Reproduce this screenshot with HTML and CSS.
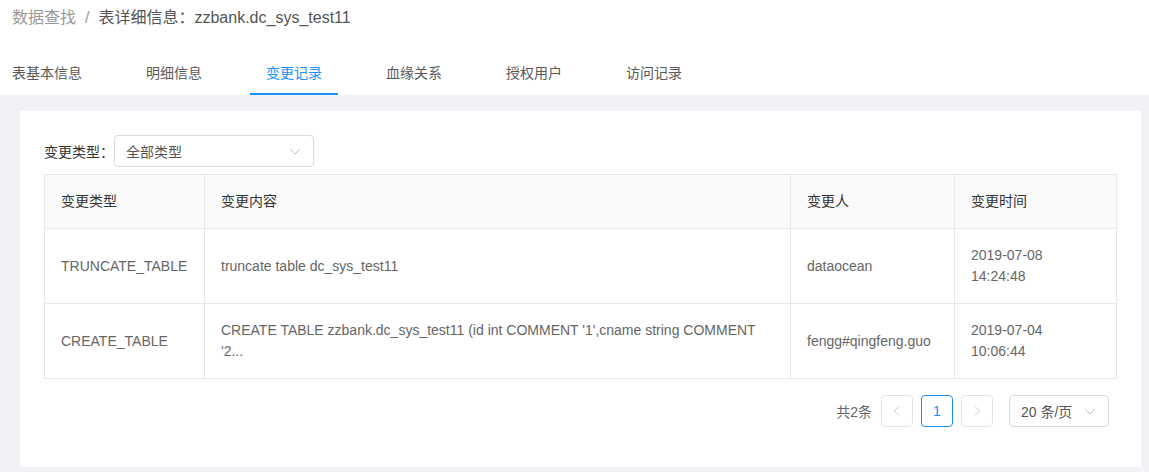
FILE: index.html
```html
<!DOCTYPE html>
<html lang="zh-CN">
<head>
<meta charset="utf-8">
<title>表详细信息</title>
<link rel="stylesheet" href="styles.css">
</head>
<body>
<header class="top">
  <div class="crumbs">
    <span class="crumb-link">数据查找</span>
    <span class="crumb-sep">/</span>
    <span class="crumb-cur">表详细信息：zzbank.dc_sys_test11</span>
  </div>
  <nav class="tabs">
    <span class="tab">表基本信息</span>
    <span class="tab">明细信息</span>
    <span class="tab active">变更记录</span>
    <span class="tab">血缘关系</span>
    <span class="tab">授权用户</span>
    <span class="tab">访问记录</span>
  </nav>
</header>
<main class="page">
  <section class="card">
    <div class="filter">
      <span class="filter-label">变更类型：</span>
      <div class="select">
        <span class="select-value">全部类型</span>
        <svg class="chev" width="12" height="12" viewBox="0 0 12 12"><path d="M1 4l5 5 5-5" fill="none" stroke="#bfbfbf" stroke-width="1"/></svg>
      </div>
    </div>
    <table class="grid">
      <colgroup>
        <col class="c1"><col class="c2"><col class="c3"><col class="c4">
      </colgroup>
      <thead>
        <tr><th>变更类型</th><th>变更内容</th><th>变更人</th><th>变更时间</th></tr>
      </thead>
      <tbody>
        <tr>
          <td>TRUNCATE_TABLE</td>
          <td>truncate table dc_sys_test11</td>
          <td>dataocean</td>
          <td><span class="line">2019-07-08</span><span class="line">14:24:48</span></td>
        </tr>
        <tr>
          <td>CREATE_TABLE</td>
          <td>CREATE TABLE zzbank.dc_sys_test11 (id int COMMENT '1',cname string COMMENT<br>'2...</td>
          <td>fengg#qingfeng.guo</td>
          <td><span class="line">2019-07-04</span><span class="line">10:06:44</span></td>
        </tr>
      </tbody>
    </table>
    <div class="pager">
      <span class="total">共2条</span>
      <span class="pbtn muted"><svg width="12" height="12" viewBox="0 0 12 12"><path d="M8 1.5L3.5 6 8 10.5" fill="none" stroke="#c8c8c8" stroke-width="1"/></svg></span>
      <span class="pbtn current">1</span>
      <span class="pbtn muted"><svg width="12" height="12" viewBox="0 0 12 12"><path d="M4 1.5L8.5 6 4 10.5" fill="none" stroke="#c8c8c8" stroke-width="1"/></svg></span>
      <div class="size">
        <span>20 条/页</span>
        <svg class="chev" width="12" height="12" viewBox="0 0 12 12"><path d="M1 4l5 5 5-5" fill="none" stroke="#bfbfbf" stroke-width="1"/></svg>
      </div>
    </div>
  </section>
</main>
</body>
</html>
```
FILE: styles.css
```css
* { box-sizing: border-box; }
html, body { margin: 0; padding: 0; }
body {
  font-family: "Liberation Sans", "Noto Sans CJK SC", sans-serif;
  font-size: 14px;
  color: #666;
  background: #f0f2f5;
  width: 1149px;
  height: 472px;
  overflow: hidden;
}
.top {
  background: #fff;
  padding: 0 0 0 12px;
}
.crumbs {
  padding-top: 6px;
  font-size: 16px;
  line-height: 24px;
  height: 30px;
  display: flex;
  gap: 9px;
}
.crumb-link, .crumb-sep { color: #999; }
.crumb-cur { color: #555; }
.tabs {
  margin-top: 21px;
  display: flex;
}
.tab {
  padding: 11px 16px 9px;
  line-height: 22px;
  margin-right: 32px;
  color: #595959;
  border-bottom: 2px solid transparent;
}
.tab:first-child { padding-left: 0; }
.tab.active {
  color: #1890ff;
  border-bottom-color: #1890ff;
}
.page {
  padding: 16px 8px 0 20px;
}
.card {
  background: #fff;
  height: 356px;
  padding: 24px 24px 40px;
}
.filter {
  display: flex;
  align-items: center;
  height: 32px;
}
.filter-label { color: #333; width: 70px; }
.select {
  width: 200px;
  height: 32px;
  border: 1px solid #d9d9d9;
  border-radius: 4px;
  display: flex;
  align-items: center;
  justify-content: space-between;
  padding: 0 12px 0 11px;
  color: #555;
}
.grid {
  margin-top: 7px;
  width: 100%;
  border-collapse: collapse;
  table-layout: fixed;
  border: 1px solid #e8e8e8;
}
.c1 { width: 160px; }
.c2 { width: 586px; }
.c3 { width: 164px; }
.grid th, .grid td {
  text-align: left;
  padding: 16px;
  line-height: 21px;
  border: 1px solid #e8e8e8;
  font-weight: normal;
  vertical-align: middle;
}
.grid th {
  background: #fafafa;
  color: #333;
}
.grid td { color: #666; }
.line { display: block; }
.pager {
  margin-top: 16px;
  display: flex;
  justify-content: flex-end;
  align-items: center;
  padding-right: 8px;
}
.total { color: #666; margin-right: 9px; }
.pbtn {
  width: 32px;
  height: 32px;
  border: 1px solid #d9d9d9;
  border-radius: 4px;
  display: flex;
  align-items: center;
  justify-content: center;
  margin-right: 8px;
  color: #666;
}
.pbtn.muted { border-color: #e3e3e3; }
.pbtn.current {
  border-color: #1890ff;
  color: #1890ff;
}
.size {
  margin-left: 8px;
  width: 100px;
  height: 32px;
  border: 1px solid #d9d9d9;
  border-radius: 4px;
  display: flex;
  align-items: center;
  justify-content: space-between;
  padding: 0 12px 0 11px;
  color: #555;
}
```
